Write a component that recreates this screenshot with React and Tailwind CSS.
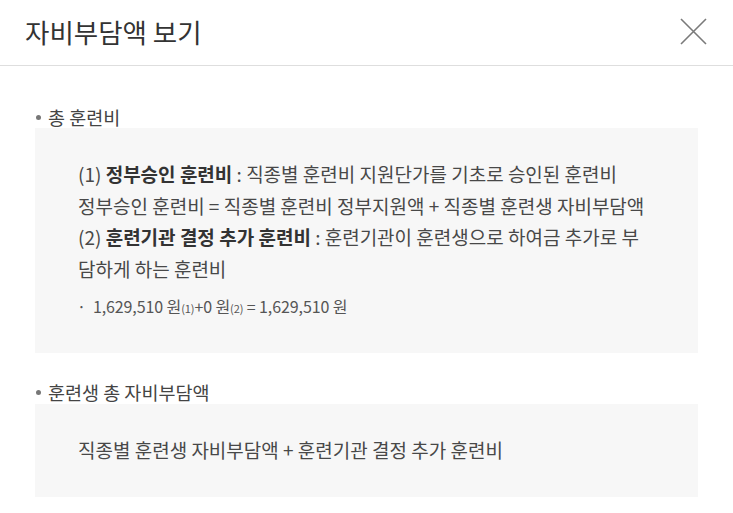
export default function App() {
  const font = { fontFamily: '"Noto Sans CJK KR", "Noto Sans", sans-serif' };
  return (
    <div className="w-[733px] h-[513px] bg-white text-[#444] overflow-hidden" style={font}>
      <div className="h-[66px] border-b border-[#dedede] flex items-center justify-between pl-[25px] pr-[26px]">
        <h1 className="text-[26.5px] leading-[30px] text-[#333] mt-[-2px]">자비부담액 보기</h1>
        <svg width="27" height="27" viewBox="0 0 27 27" className="mt-[-3px]">
          <path d="M1 1 L26 26 M26 1 L1 26" stroke="#7a7a7a" strokeWidth="1.6" fill="none" />
        </svg>
      </div>
      <div className="px-[35px] pt-[39px]">
        <div className="flex items-center h-[24px] text-[18.5px] leading-[24px] text-[#444]">
          <span className="w-[5px] h-[5px] rounded-full bg-[#777] ml-[1px] mr-[7px]"></span>
          <span>총 훈련비</span>
        </div>
        <div className="mt-[-1px] bg-[#f7f7f7] pl-[43px] pt-[30px] pb-[35px] text-[19px] leading-[31.5px] text-[#484848]">
          <div className="whitespace-nowrap">(1) <b className="font-bold text-[#333]">정부승인 훈련비</b> : 직종별 훈련비 지원단가를 기초로 승인된 훈련비</div>
          <div className="whitespace-nowrap">정부승인 훈련비 = 직종별 훈련비 정부지원액 + 직종별 훈련생 자비부담액</div>
          <div className="whitespace-nowrap">(2) <b className="font-bold text-[#333]">훈련기관 결정 추가 훈련비</b> : 훈련기관이 훈련생으로 하여금 추가로 부</div>
          <div className="whitespace-nowrap">담하게 하는 훈련비</div>
          <div className="mt-[12px] flex items-baseline text-[16px] leading-[20px] tracking-[-0.1px] text-[#555] whitespace-nowrap">
            <span className="ml-[-1px] pr-[7px]">·</span>
            <span>1,629,510 원<span className="text-[11px]">(1)</span>+0 원<span className="text-[11px]">(2)</span> = 1,629,510 원</span>
          </div>
        </div>
        <div className="mt-[27px] flex items-center h-[24px] text-[18.5px] leading-[24px] text-[#444]">
          <span className="w-[5px] h-[5px] rounded-full bg-[#777] ml-[1px] mr-[7px]"></span>
          <span>훈련생 총 자비부담액</span>
        </div>
        <div className="bg-[#f7f7f7] h-[93px] flex items-center pl-[43px] text-[19px] text-[#484848] whitespace-nowrap">
          직종별 훈련생 자비부담액 + 훈련기관 결정 추가 훈련비
        </div>
      </div>
    </div>
  );
}
